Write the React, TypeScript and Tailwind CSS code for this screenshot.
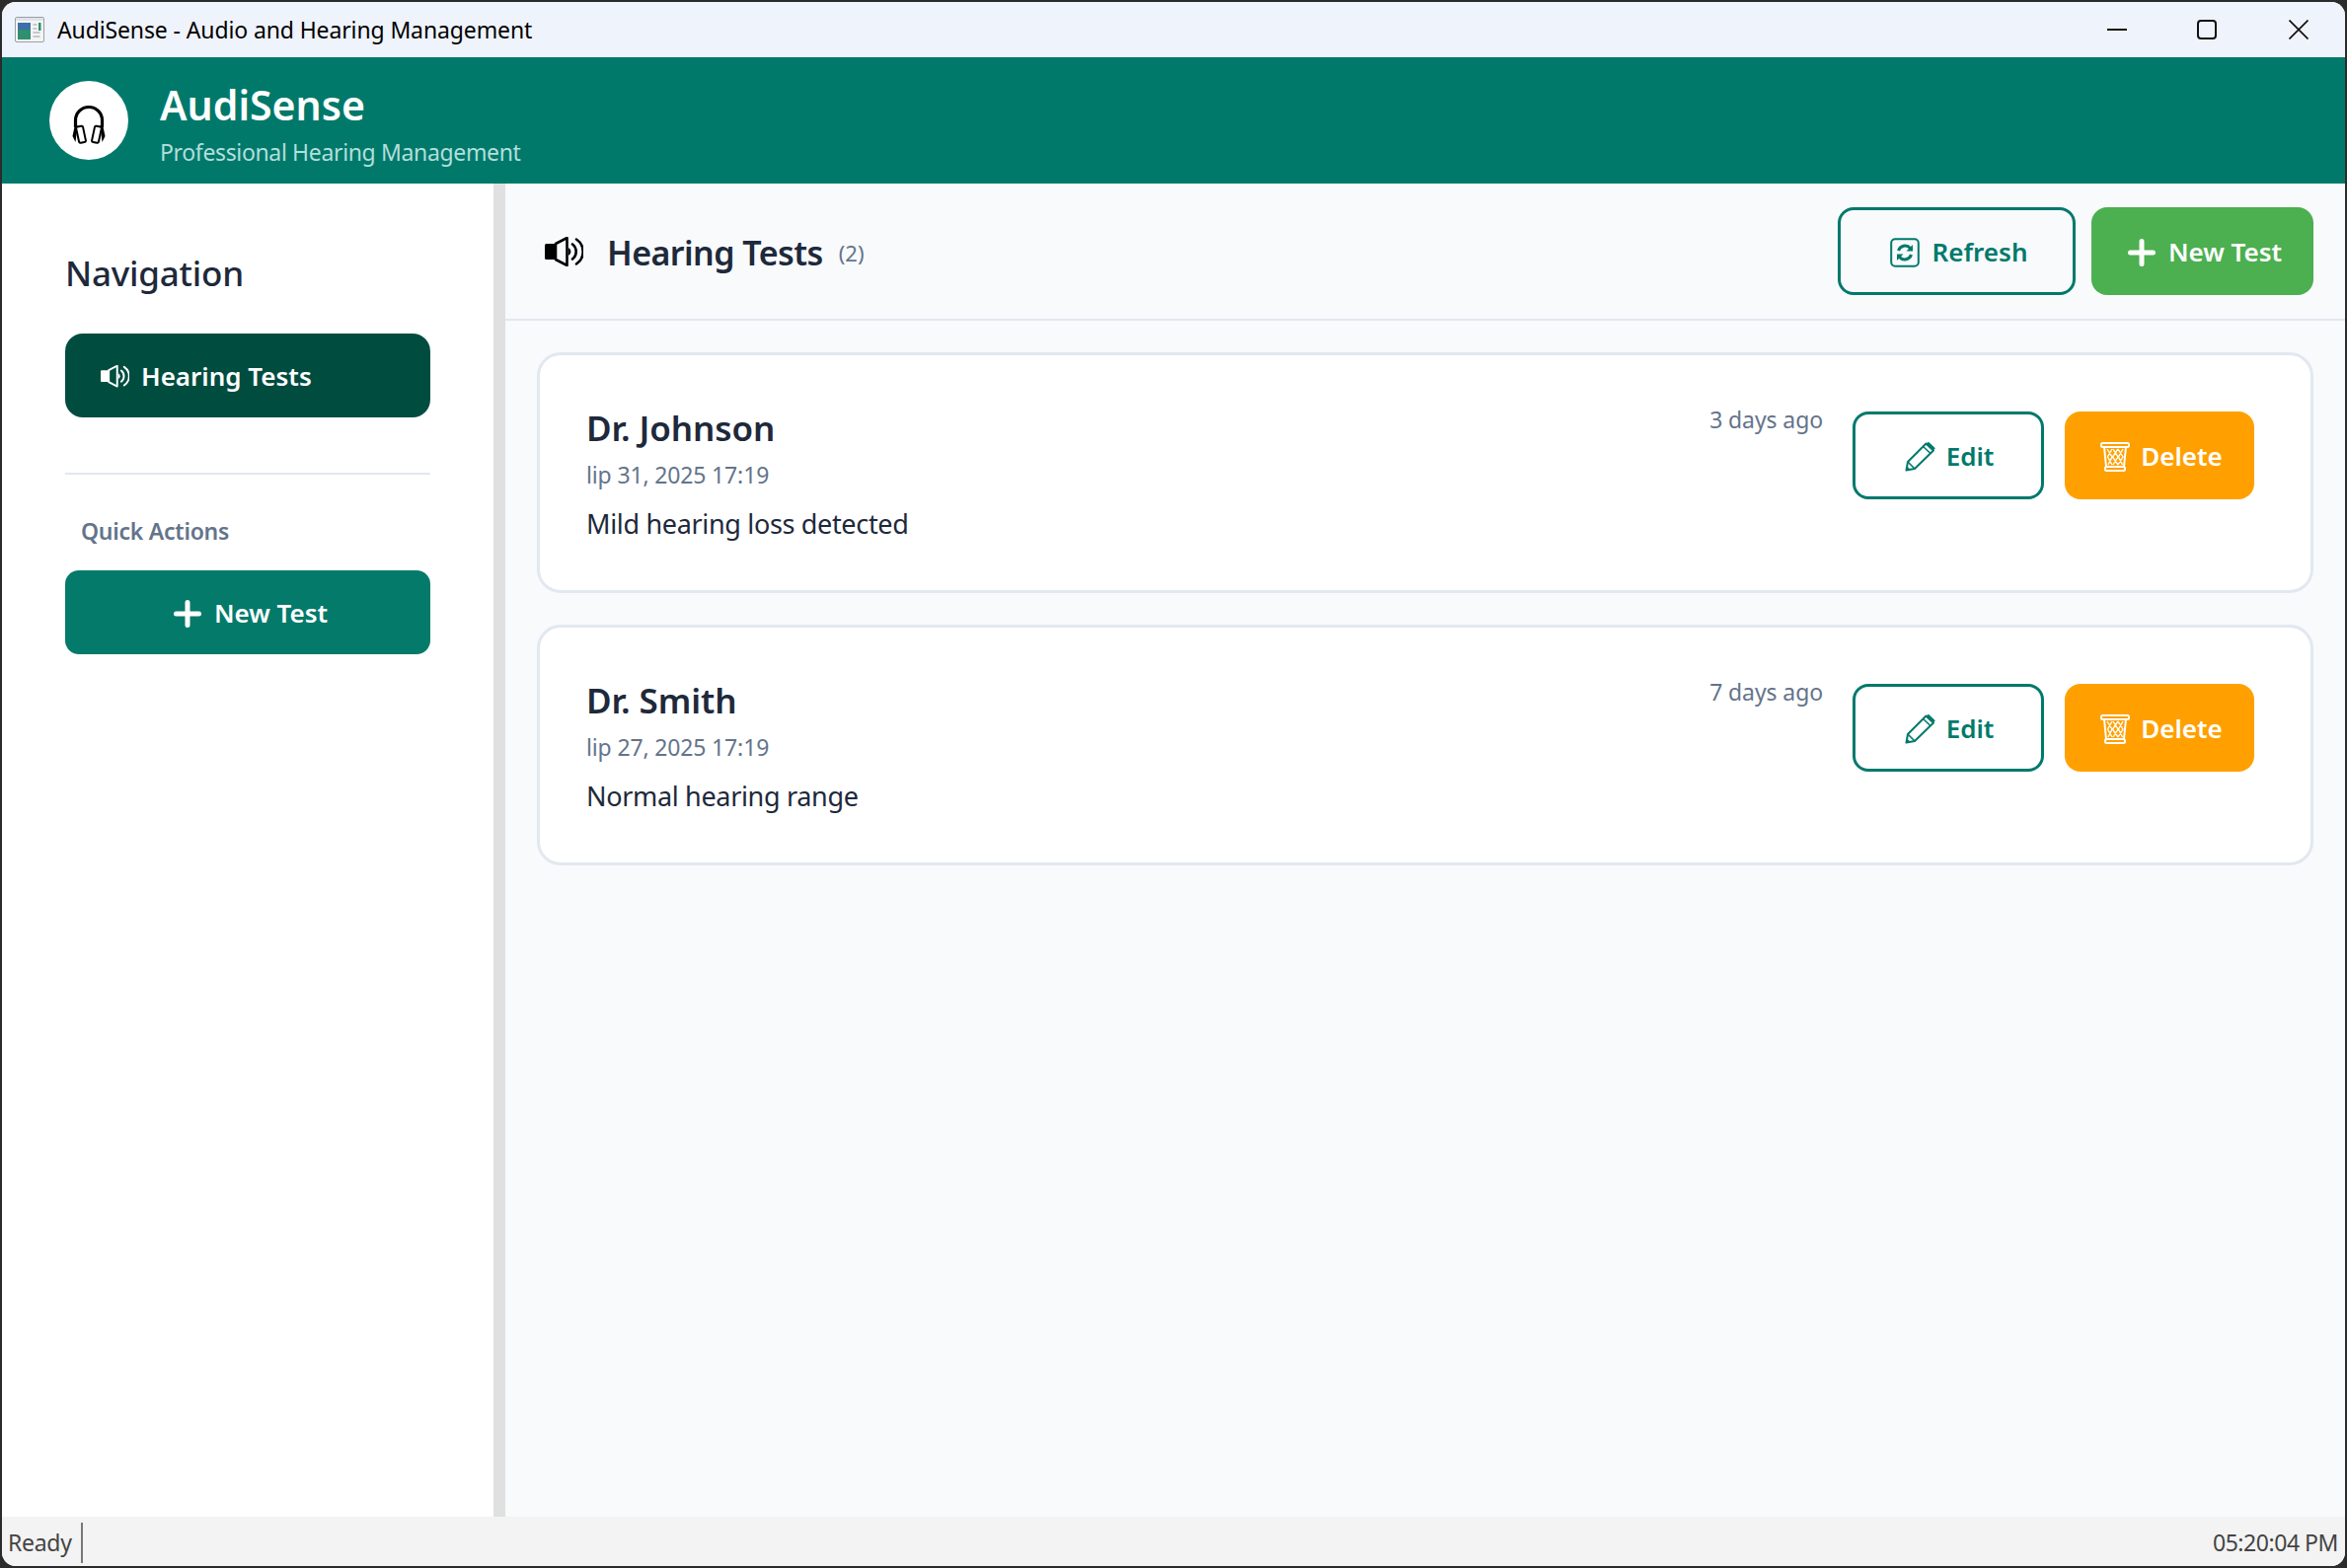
function AppIcon() {
  return (
    <svg width="30" height="26" viewBox="0 0 30 26" className="shrink-0">
      <rect x="0.5" y="0.5" width="29" height="25" rx="1.5" fill="#f4f4f4" stroke="#9aa0a6" />
      <rect x="1" y="1" width="28" height="3" fill="#dfe3e8" />
      <rect x="3" y="6" width="13" height="17" fill="#2f8f6f" />
      <rect x="3" y="6" width="13" height="7" fill="#3d6fa8" />
      <rect x="24" y="6" width="2.5" height="8" fill="#2f8f6f" />
      <path d="M18.5 8h4M18.5 12h4M18.5 16h7M18.5 20h7" stroke="#b5b9be" strokeWidth="1.5" />
    </svg>
  );
}

function Headphones() {
  return (
    <svg width="36" height="42" viewBox="0 0 36 42" className="mt-[6px]">
      <path d="M4.5 25V18a13.5 13.5 0 0 1 27 0v7" fill="none" stroke="#000" strokeWidth="3.2" />
      <path d="M4 22 1.5 34l3 6 2-17z" fill="#000" />
      <path d="M32 22l2.5 12-3 6-2-17z" fill="#000" />
      <rect x="6.5" y="24" width="7" height="16.5" rx="1.5" transform="rotate(-12 10 32)" fill="#fff" stroke="#000" strokeWidth="2" />
      <rect x="22.5" y="24" width="7" height="16.5" rx="1.5" transform="rotate(12 26 32)" fill="#fff" stroke="#000" strokeWidth="2" />
    </svg>
  );
}

function Speaker({ color, size }: { color: string; size: number }) {
  return (
    <svg width={size} height={(size * 30) / 39} viewBox="0 0 39 30" className="shrink-0">
      <rect x="0" y="7" width="11" height="16" rx="1.5" fill={color} />
      <path d="M11 7 22.5 1v28L11 23z" fill="none" stroke={color} strokeWidth="2.6" strokeLinejoin="round" />
      <path d="M24 11a4.5 4.5 0 0 1 0 8z" fill={color} />
      <path d="M28 7.5a9.5 9.5 0 0 1 0 15" fill="none" stroke={color} strokeWidth="2.6" strokeLinecap="round" />
      <path d="M32 2.5a15 15 0 0 1 0 25" fill="none" stroke={color} strokeWidth="2.6" strokeLinecap="round" />
    </svg>
  );
}

function Plus({ size }: { size: number }) {
  return (
    <svg width={size} height={size} viewBox="0 0 28 28" className="shrink-0">
      <path d="M14 2.5v23M2.5 14h23" stroke="#fff" strokeWidth="5" strokeLinecap="round" />
    </svg>
  );
}

function RefreshBox() {
  return (
    <svg width="30" height="30" viewBox="0 0 30 30" className="shrink-0">
      <rect x="1.2" y="1.2" width="27.6" height="27.6" rx="4" fill="none" stroke="#00796b" strokeWidth="2" />
      <path d="M8.5 13a7 7 0 0 1 12-2.5" fill="none" stroke="#00796b" strokeWidth="3" />
      <path d="M23 7v6.5h-6.5z" fill="#00796b" />
      <path d="M21.5 17a7 7 0 0 1-12 2.5" fill="none" stroke="#00796b" strokeWidth="3" />
      <path d="M7 23v-6.5h6.5z" fill="#00796b" />
    </svg>
  );
}

function Pencil() {
  return (
    <svg width="32" height="31" viewBox="0 0 32 31" className="shrink-0">
      <path d="M1.5 29.5 3 21 21.5 2.5 29 9.5 10 28z" fill="none" stroke="#00796b" strokeWidth="2" strokeLinejoin="round" />
      <path d="M24 0.8 30.8 7.2 28.5 10 21 3z" fill="#00796b" />
      <path d="M3 21l7 7M18.5 5.5l7.5 7" stroke="#00796b" strokeWidth="1.6" />
      <path d="M1.5 29.5 2.2 25.5 5.5 28.8z" fill="#00796b" />
    </svg>
  );
}

function Trash() {
  return (
    <svg width="30" height="30" viewBox="0 0 30 30" className="shrink-0">
      <rect x="1" y="1" width="28" height="4" rx="1.5" fill="none" stroke="#fff" strokeWidth="2" />
      <rect x="5" y="25" width="20" height="4" rx="1.5" fill="none" stroke="#fff" strokeWidth="2" />
      <path d="M4 5 6 25M26 5 24 25" stroke="#fff" strokeWidth="2" />
      <path d="M7 7 12 15 8 23M13 7 18 15 13 23M18 7 23 15 18 23M12 7 7.5 15 12 23M18 7 12.5 15 18 23M23 7 18.5 15 22.5 23" fill="none" stroke="#fff" strokeWidth="1.4" />
    </svg>
  );
}

function TestCard({ name, date, note, ago }: { name: string; date: string; note: string; ago: string }) {
  return (
    <div className="flex h-[244px] items-start rounded-[24px] border-[3px] border-[#e2e8f0] bg-white pl-[47px] pr-[57px]">
      <div className="flex-1 pt-[51px]">
        <div className="text-[35px] font-semibold leading-[46px] tracking-[-0.1px] text-[#1e293b]">{name}</div>
        <div className="mt-[8px] text-[23px] leading-[32px] tracking-[-0.15px] text-[#64748b]">{date}</div>
        <div className="mt-[15px] text-[27px] leading-[38px] tracking-[-0.33px] text-[#1e293b]">{note}</div>
      </div>
      <div className="mt-[49px] mr-[30px] text-[23px] leading-[32px] tracking-[-0.1px] text-[#64748b]">{ago}</div>
      <div className="mt-[57px] flex gap-[21px]">
        <button className="flex h-[89px] w-[194px] items-center justify-center gap-[10px] rounded-[16px] border-[3px] border-[#00796b] bg-white pl-[2px] pt-[2px] text-[26px] font-semibold text-[#00796b]">
          <Pencil />
          Edit
        </button>
        <button className="flex h-[89px] w-[192px] items-center justify-center gap-[11px] rounded-[16px] bg-[#ffa000] pl-[4px] pt-[2px] text-[26px] font-semibold text-white">
          <Trash />
          Delete
        </button>
      </div>
    </div>
  );
}

export default function App() {
  return (
    <div className="h-[1589px] bg-[#2b2b2b] p-[2px] font-['Noto_Sans',sans-serif]">
      <div className="flex h-full flex-col overflow-hidden rounded-[14px] bg-white">
        {/* Title bar */}
        <div className="flex h-[56px] shrink-0 items-center bg-[#eff3fb] pl-[13px]">
          <AppIcon />
          <span className="ml-[13px] text-[23px] tracking-[-0.12px] text-black">AudiSense - Audio and Hearing Management</span>
          <div className="ml-auto flex items-center">
            <svg width="20" height="20" viewBox="0 0 20 20" className="mr-[71px]">
              <path d="M0 10h20" stroke="#111" strokeWidth="2" />
            </svg>
            <svg width="20" height="20" viewBox="0 0 20 20" className="mr-[73px]">
              <rect x="1" y="1" width="18" height="18" rx="3" fill="none" stroke="#111" strokeWidth="2" />
            </svg>
            <svg width="20" height="20" viewBox="0 0 20 20" className="mr-[37px]">
              <path d="M0.5 0.5l19 19M19.5 0.5l-19 19" stroke="#111" strokeWidth="1.7" />
            </svg>
          </div>
        </div>

        {/* App header */}
        <div className="flex h-[128px] shrink-0 items-center bg-[#00796b] pl-[48px]">
          <div className="flex h-[80px] w-[80px] items-center justify-center rounded-full bg-white">
            <Headphones />
          </div>
          <div className="ml-[32px] pt-[5px]">
            <div className="text-[41px] font-semibold leading-[52px] text-white">AudiSense</div>
            <div className="mt-[6px] text-[23px] leading-[32px] tracking-[-0.35px] text-[#b2dfdb]">Professional Hearing Management</div>
          </div>
        </div>

        <div className="flex min-h-0 flex-1">
          {/* Sidebar */}
          <div className="flex w-[498px] shrink-0 flex-col bg-white pl-[64px] pr-[64px]">
            <div className="mt-[66px] text-[35px] font-medium leading-[50px] tracking-[-0.2px] text-[#1e293b]">Navigation</div>
            <button className="mt-[36px] flex h-[85px] items-center gap-[12px] rounded-[18px] bg-[#004d40] pl-[36px] pt-[2px] text-[26px] font-semibold text-white">
              <Speaker color="#fff" size={29} />
              Hearing Tests
            </button>
            <div className="mt-[56px] h-[2px] bg-[#e2e8f0]" />
            <div className="mt-[41px] pl-[16px] text-[23px] font-semibold leading-[32px] tracking-[-0.25px] text-[#64748b]">Quick Actions</div>
            <button className="mt-[24px] flex h-[85px] items-center justify-center gap-[13px] rounded-[14px] bg-[#047a6b] pl-[6px] pt-[2px] text-[26px] font-semibold text-white">
              <Plus size={28} />
              New Test
            </button>
          </div>
          <div className="w-[12px] shrink-0 bg-[#e0e0e0]" />

          {/* Main */}
          <div className="min-w-0 flex-1 bg-[#f8fafc]">
            <div className="flex h-[139px] items-center border-b-2 border-[#e2e8f0] pl-[40px] pr-[32px]">
              <Speaker color="#000" size={39} />
              <span className="ml-[24px] pt-[3px] text-[34px] font-semibold leading-[46px] tracking-[-0.55px] text-[#1e293b]">Hearing Tests</span>
              <span className="ml-[16px] pt-[3px] text-[22px] text-[#64748b]">(2)</span>
              <button className="ml-auto flex h-[89px] w-[241px] items-center justify-center gap-[13px] rounded-[16px] border-[3px] border-[#00796b] pl-[4px] pt-[2px] text-[26px] font-semibold text-[#00796b]">
                <RefreshBox />
                Refresh
              </button>
              <button className="ml-[16px] flex h-[89px] w-[225px] items-center justify-center gap-[13px] rounded-[16px] bg-[#4caf50] pl-[5px] pt-[2px] text-[26px] font-semibold text-white">
                <Plus size={28} />
                New Test
              </button>
            </div>
            <div className="flex flex-col gap-[32px] pl-[32px] pr-[32px] pt-[32px]">
              <TestCard name="Dr. Johnson" date="lip 31, 2025 17:19" note="Mild hearing loss detected" ago="3 days ago" />
              <TestCard name="Dr. Smith" date="lip 27, 2025 17:19" note="Normal hearing range" ago="7 days ago" />
            </div>
          </div>
        </div>

        {/* Status bar */}
        <div className="flex h-[50px] shrink-0 items-center bg-[#f3f3f3] pl-[6px] pr-[7px] pt-[2px] text-[23px] text-[#444]">
          <span className="tracking-[-0.3px]">Ready</span>
          <div className="ml-[9px] h-[41px] w-[2px] bg-[#777]" />
          <span className="ml-auto tracking-[-0.45px]">05:20:04 PM</span>
        </div>
      </div>
    </div>
  );
}
